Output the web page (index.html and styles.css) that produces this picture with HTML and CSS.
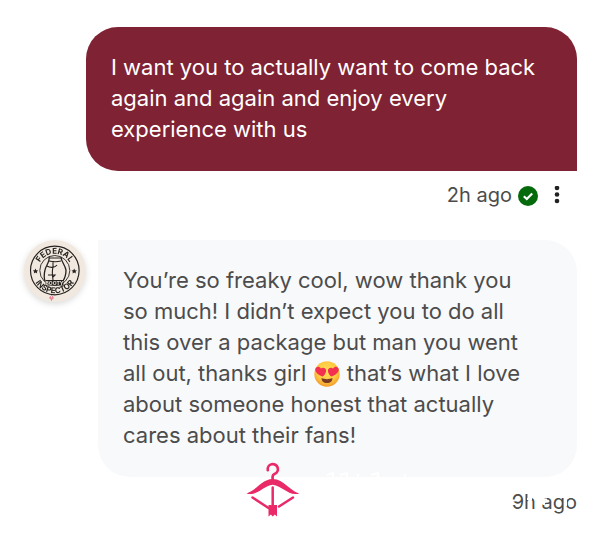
FILE: index.html
```html
<!DOCTYPE html>
<html lang="en">
<head>
    <meta charset="UTF-8">
    <meta name="viewport" content="width=device-width, initial-scale=1">
    <title>Messages</title>
    <link rel="stylesheet" href="styles.css">
</head>
<body>
<main class="chat">
    <section class="message sent">
        <p class="bubble">I want you to actually want to come back again and again and enjoy every experience with us</p>
        <div class="meta">
            <time>2h ago</time>
            <svg class="check" viewBox="0 0 20 20" role="img" aria-label="Delivered">
                <circle cx="10" cy="10" r="10" fill="#046a0b"/>
                <path d="M5.8 10.2l3 2.8 5.4-5.6" fill="none" stroke="#fff" stroke-width="2.2"/>
            </svg>
            <button class="more" type="button" aria-label="More options">
                <svg viewBox="0 0 6 20">
                    <circle cx="3" cy="2" r="2.3"/>
                    <circle cx="3" cy="8.5" r="2.3"/>
                    <circle cx="3" cy="15" r="2.3"/>
                </svg>
            </button>
        </div>
    </section>

    <section class="message received">
        <svg class="avatar" viewBox="0 0 64 64" role="img" aria-label="Federal Inspector">
            <defs>
                <path id="arc-top" d="M15 30.5a16.8 16.8 0 0 1 33.6 0"/>
                <path id="arc-bottom" d="M9 30.5a22.8 22.8 0 0 0 45.6 0"/>
            </defs>
            <circle cx="31.8" cy="31" r="31" fill="#f1e9df"/>
            <g fill="none" stroke="#25211e">
                <circle cx="31.8" cy="30.5" r="24.3" stroke-width="1.2"/>
                <circle cx="31.8" cy="30.5" r="15" stroke-width=".9"/>
                <path d="M26 17c1 5-3 8-4 13-1 4-1 8 0 11M38 17c0 4 4 8 5 13 0 4-1 8-3 11" stroke-width="1.3"/>
                <path d="M26 18h12M26 21c4 1 8 1 12 0M30 21v6c-1 4-1 7 0 13M24 26c3 2 8 2 10-1M25 35h7l-2 2" stroke-width="1.1"/>
            </g>
            <path d="M22.5 40h18v5.5h-18z" fill="#25211e"/>
            <path d="M12.5 28.5l.8 1.7 1.9.2-1.4 1.3.4 1.9-1.7-1-1.7 1 .4-1.9-1.4-1.3 1.9-.2zM51.2 28.5l.8 1.7 1.9.2-1.4 1.3.4 1.9-1.7-1-1.7 1 .4-1.9-1.4-1.3 1.9-.2z" fill="#25211e"/>
            <text class="badge-text"><textPath href="#arc-top" startOffset="50%">FEDERAL</textPath></text>
            <text class="badge-text"><textPath href="#arc-bottom" startOffset="50%">INSPECTOR</textPath></text>
            <text class="badge-label" x="31.5" y="44.5">BOOTY</text>
            <path d="M28.5 55.5a1.6 1.6 0 0 1 .8 2.500l-.8 2.500-.8-2.500a1.6 1.6 0 0 1 .8-2.500zM26 58h5" fill="none" stroke="#ec6a87" stroke-width=".9"/>
        </svg>
        <p class="bubble">You’re so freaky cool, wow thank you so much! I didn’t expect you to do all this over a package but man you went all out, thanks girl <svg class="emoji" viewBox="0 0 28 28" role="img" aria-label="heart eyes">
                <defs>
                    <radialGradient id="face" cx="50%" cy="40%" r="60%">
                        <stop offset="0" stop-color="#ffe15a"/>
                        <stop offset=".65" stop-color="#fdc940"/>
                        <stop offset="1" stop-color="#f39a2b"/>
                    </radialGradient>
                </defs>
                <circle cx="14" cy="14" r="12.7" fill="url(#face)"/>
                <path d="M8.5 18c3 1.5 8 1.5 11 0 0 3-2 5-5.5 5s-5.5-2-5.5-5z" fill="#7b3a22"/>
                <path d="M9.8 16.5C5.5 15.3 2 12.5 2.3 9.3c.4-2.8 3.9-3.5 5.6-.9 2.6-1.6 5.7.2 5.2 2.9-.4 2.1-1.7 3.9-3.3 5.200zM18.2 16.500c4.3-1.2 7.8-4 7.500-7.200-.4-2.800-3.900-3.500-5.600-.9-2.600-1.600-5.700.2-5.200 2.900.4 2.100 1.700 3.900 3.300 5.200z" fill="#f3304f"/>
            </svg> that’s what I love about someone honest that actually cares about their fans!</p>
        <div class="meta">
            <time>9h ago</time>
        </div>
    </section>

    <svg class="watermark" viewBox="0 0 332 58" aria-hidden="true">
        <path d="M22.8 10.2a5.1 5.1 0 1 1 6.7 3.8q-1.9.8-1.9 2.8V20" fill="none" stroke="#ea2a68" stroke-width="2.7" stroke-linecap="round"/>
        <path d="M1.5 33.5C12 30 16 19.5 27.7 19 39.5 19.5 43.5 30 54.3 33.5 43 36.5 38 26 27.7 24.8 17.5 26 12.5 36.5 1.5 33.5z" fill="#ea2a68"/>
        <path d="M27.7 27.5V48M7.5 37.5l16 10.5M48 37.5L34 46.5" fill="none" stroke="#ea2a68" stroke-width="2.5" stroke-linecap="round"/>
        <path d="M23.5 45h3l1.2 1.5L29 45h3v11.500l-2.200-2-2 2-2-2-2.300 2z" fill="#ea2a68"/>
        <!-- white lettering edges and the strokes that run across the timestamp -->
        <g fill="none" stroke="#fff" stroke-width="2">
            <path d="M82 15l6-2v4M95 15l7-2v4M113 14v3M126 15l7-2v4M160 14v3"/>
            <path d="M266 41l6-1M282 39h5M295 39.500h7M299 45v-5M321 38v8"/>
        </g>
    </svg>
</main>
</body>
</html>
```

FILE: styles.css
```css
* {
    box-sizing: border-box;
}

body {
    margin: 0;
    background: #fff;
    color: #4c4c4c;
    font-family: Inter, "Liberation Sans", sans-serif;
    font-size: 22px;
    line-height: 31px;
}

.chat {
    position: relative;
    padding: 27px 23px 24px;
}

.bubble {
    margin: 0;
    padding: 25px 25px 26px;
    border-radius: 32px;
}

.sent .bubble {
    margin-left: 63px;
    background: #7f2233;
    color: #fff;
    border-bottom-right-radius: 0;
}

.meta {
    display: flex;
    align-items: center;
    justify-content: flex-end;
    gap: 6px;
    font-size: 20px;
}

.sent .meta {
    padding: 9px 17px 0 0;
}

.check {
    width: 20px;
    height: 20px;
}

.more {
    margin-left: 10px;
    padding: 0;
    border: 0;
    background: none;
    line-height: 0;
}

.more svg {
    width: 6px;
    height: 20px;
    fill: #222;
}

.received {
    display: grid;
    grid-template-columns: 64px 1fr;
    column-gap: 11px;
    align-items: start;
    margin-top: 29px;
}

.received .bubble {
    padding-right: 48px;
    background: #f8f9fb;
    border-top-left-radius: 0;
}

.received .meta {
    grid-column: 2;
    padding-top: 10px;
}

.avatar {
    width: 64px;
    height: 64px;
    border-radius: 50%;
    filter: drop-shadow(0 2px 3px rgba(0, 0, 0, .15));
}

.badge-text {
    fill: #25211e;
    font-size: 8px;
    font-weight: 700;
    text-anchor: middle;
}

.badge-label {
    fill: #f1e9df;
    font-size: 5px;
    font-weight: 700;
    text-anchor: middle;
}

.emoji {
    width: 28px;
    height: 28px;
    vertical-align: -7px;
}

/* brand mark sits over the lower edge of the last bubble */
.watermark {
    position: absolute;
    right: 23px;
    bottom: 24px;
    width: 332px;
    height: 58px;
}
```
